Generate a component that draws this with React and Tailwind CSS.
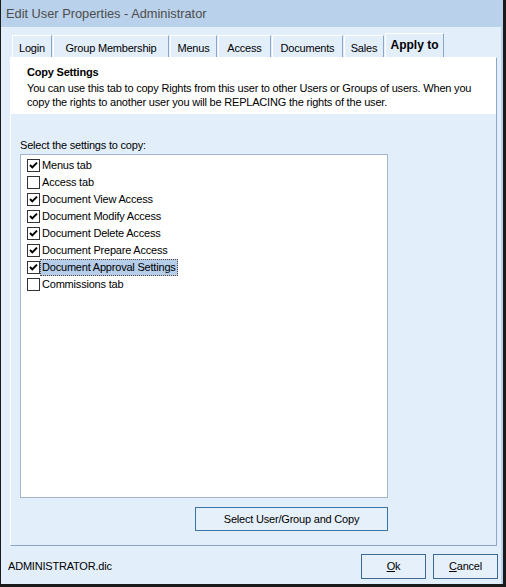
import React from "react";

const font = { fontFamily: '"Liberation Sans", Arial, sans-serif' };

function Check({ checked }) {
  return (
    <div className="w-[13px] h-[13px] border border-[#333333] bg-white flex items-center justify-center shrink-0">
      {checked && (
        <svg width="11" height="11" viewBox="0 0 11 11">
          <path d="M2 5 L4.3 7.4 L9 2.6" fill="none" stroke="#000" strokeWidth="2" />
        </svg>
      )}
    </div>
  );
}

const items = [
  ["Menus tab", true],
  ["Access tab", false],
  ["Document View Access", true],
  ["Document Modify Access", true],
  ["Document Delete Access", true],
  ["Document Prepare Access", true],
  ["Document Approval Settings", true, true],
  ["Commissions tab", false],
];

const tabs = [
  ["Login", "w-[40px]"],
  ["Group Membership", "w-[116px]"],
  ["Menus", "w-[47px]"],
  ["Access", "w-[53px]"],
  ["Documents", "w-[71px]"],
  ["Sales", "w-[40px]"],
];

export default function App() {
  return (
    <div
      className="w-[506px] h-[587px] flex flex-col border-l border-r-[3px] border-b-[3px] border-[#1a1a1a] text-[11px] tracking-[-0.2px] text-black"
      style={font}
    >
      <div className="h-[27px] shrink-0 bg-[#b9d1ea] flex items-center pl-[5px] text-[12.8px] tracking-normal text-[#4d4d4d]">
        Edit User Properties - Administrator
      </div>
      <div className="flex-1 flex flex-col bg-[#e3eefb] border-r-2 border-[#b9d1ea]">
        <div className="flex items-end gap-px pl-[11px] pt-[6px] h-[30px]">
          {tabs.map(([t, w]) => (
            <div
              key={t}
              className={`${w} h-[22px] border-t border-l border-white border-r border-r-[#8aa7cb] flex justify-center pt-[5px] leading-[14px]`}
            >
              {t}
            </div>
          ))}
          <div className="w-[59px] h-[24px] border-t border-l border-white border-r border-r-[#8aa7cb] flex justify-center pt-[4px] leading-[14px] font-bold text-[12px] tracking-normal">
            Apply to
          </div>
        </div>
        <div className="ml-[9px] w-[487px] h-[489px] border-l border-t border-white border-r border-b border-r-[#8aa7cb] border-b-[#8aa7cb] flex flex-col">
          <div className="h-[56px] bg-white pl-[16px] pt-[7px] leading-[14px]">
            <div className="font-bold">Copy Settings</div>
            <div className="mt-[2px]">
              You can use this tab to copy Rights from this user to other Users or Groups of users. When you
            </div>
            <div>copy the rights to another user you will be REPLACING the rights of the user.</div>
          </div>
          <div className="pl-[9px] mt-[24px] leading-[14px]">Select the settings to copy:</div>
          <div className="ml-[9px] mt-[2px] w-[368px] h-[344px] border border-[#a3b6cc] bg-white pt-[2px] pl-[6px]">
            {items.map(([label, checked, sel]) => (
              <div key={label} className="h-[17px] flex items-center">
                <Check checked={checked} />
                <span
                  className={`h-[17px] flex items-center px-[1px] ${
                    sel ? "bg-[#b5cde9] border border-dotted border-[#5b4a3c]" : "border border-transparent"
                  }`}
                >
                  {label}
                </span>
              </div>
            ))}
          </div>
          <div className="ml-[9px] mt-[9px] w-[368px] flex justify-end">
            <button className="w-[193px] h-[24px] border border-[#3b73a6] bg-[#e6f0fb] flex items-center justify-center">
              Select User/Group and Copy
            </button>
          </div>
        </div>
        <div className="flex items-start pt-[8px] pl-[7px] pr-[3px]">
          <div className="h-[25px] flex items-center flex-1">ADMINISTRATOR.dic</div>
          <button className="w-[65px] h-[25px] border border-[#3b6a96] bg-[#e6f0fb] flex items-center justify-center">
            <span><span className="underline">O</span>k</span>
          </button>
          <button className="ml-[7px] w-[65px] h-[25px] border border-[#3b6a96] bg-[#e6f0fb] flex items-center justify-center">
            <span><span className="underline">C</span>ancel</span>
          </button>
        </div>
      </div>
    </div>
  );
}
